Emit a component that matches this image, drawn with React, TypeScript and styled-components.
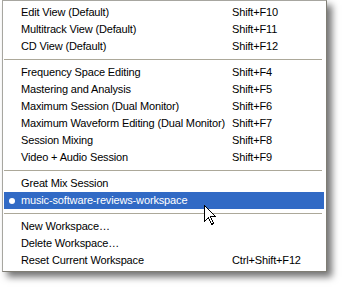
import styled, { createGlobalStyle } from "styled-components";

const GlobalStyle = createGlobalStyle`
  html, body {
    margin: 0;
    padding: 0;
    background: #ffffff;
  }
  body {
    font-family: Tahoma, "Liberation Sans", Arial, sans-serif;
    font-size: 11px;
    letter-spacing: -0.15px;
    color: #000000;
  }
`;

const Page = styled.div`
  position: relative;
  width: 342px;
  height: 287px;
  padding-left: 2px;
  box-sizing: border-box;
  overflow: hidden;
`;

const Menu = styled.div`
  width: 325px;
  box-sizing: border-box;
  padding: 3px 2px 2px 1px;
  background: #ffffff;
  border: 1px solid #a7a6a0;
  border-right-color: #7f7d74;
  border-bottom-color: #7f7d74;
  box-shadow: 5px 5px 7px rgba(0, 0, 0, 0.55);
`;

const Item = styled.div<{ $active?: boolean }>`
  display: grid;
  grid-template-columns: 17px 211px 1fr;
  align-items: center;
  height: 17px;
  line-height: 17px;
  white-space: nowrap;
  background: ${(p) => (p.$active ? "#316ac5" : "transparent")};
  color: ${(p) => (p.$active ? "#ffffff" : "#000000")};
`;

const Mark = styled.span`
  display: flex;
  justify-content: center;
  align-items: center;
  padding-right: 1px;
  &::before {
    content: "";
    width: 6px;
    height: 6px;
    border-radius: 50%;
    background: #ffffff;
  }
`;

const Label = styled.span`
  overflow: visible;
`;

const Shortcut = styled.span``;

const Separator = styled.div`
  height: 1px;
  margin: 4px 2px 4px 0;
  background: #aca899;
`;

const Cursor = styled.svg`
  position: absolute;
  left: 204px;
  top: 205px;
`;

type Entry = { label: string; key?: string; checked?: boolean } | "sep";

const entries: Entry[] = [
  { label: "Edit View (Default)", key: "Shift+F10" },
  { label: "Multitrack View (Default)", key: "Shift+F11" },
  { label: "CD View (Default)", key: "Shift+F12" },
  "sep",
  { label: "Frequency Space Editing", key: "Shift+F4" },
  { label: "Mastering and Analysis", key: "Shift+F5" },
  { label: "Maximum Session (Dual Monitor)", key: "Shift+F6" },
  { label: "Maximum Waveform Editing (Dual Monitor)", key: "Shift+F7" },
  { label: "Session Mixing", key: "Shift+F8" },
  { label: "Video + Audio Session", key: "Shift+F9" },
  "sep",
  { label: "Great Mix Session" },
  { label: "music-software-reviews-workspace", checked: true },
  "sep",
  { label: "New Workspace…" },
  { label: "Delete Workspace…" },
  { label: "Reset Current Workspace", key: "Ctrl+Shift+F12" },
];

export default function App() {
  return (
    <>
      <GlobalStyle />
      <Page>
        <Menu>
          {entries.map((e, i) =>
            e === "sep" ? (
              <Separator key={i} />
            ) : (
              <Item key={i} $active={e.checked}>
                {e.checked ? <Mark /> : <span />}
                <Label>{e.label}</Label>
                <Shortcut>{e.key}</Shortcut>
              </Item>
            )
          )}
        </Menu>
        <Cursor width="13" height="21" viewBox="0 0 13 21">
          <path
            d="M0.5 0.5 L0.5 16.5 L4.5 12.5 L7.5 19.5 L9.5 18.5 L6.5 11.5 L11.5 11.5 Z"
            fill="#ffffff"
            stroke="#000000"
            strokeWidth="1"
            shapeRendering="crispEdges"
          />
        </Cursor>
      </Page>
    </>
  );
}
